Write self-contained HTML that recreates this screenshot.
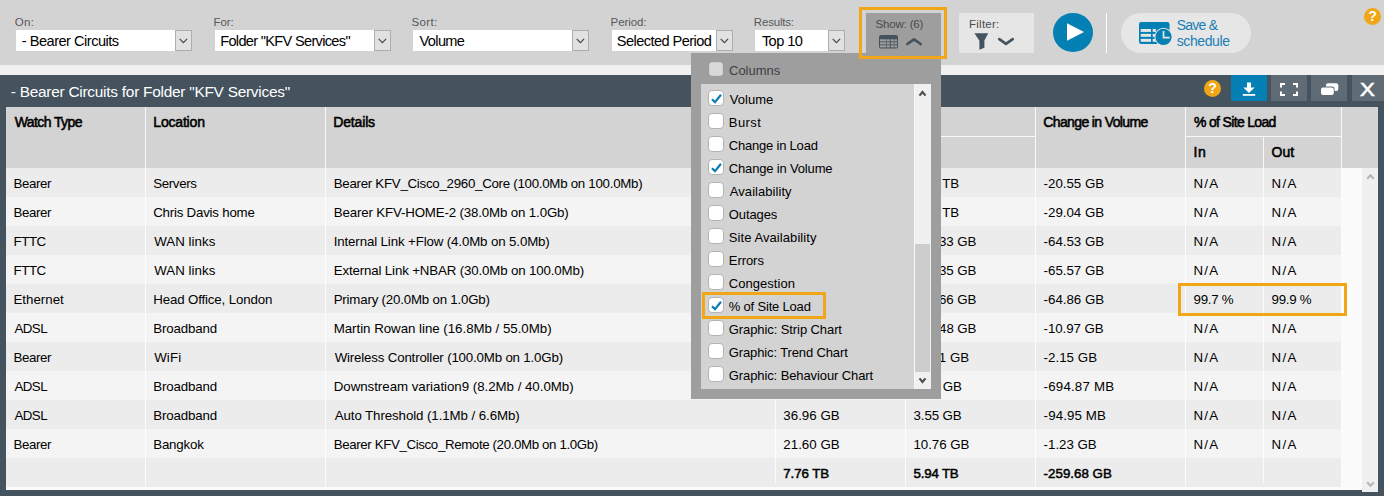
<!DOCTYPE html>
<html lang="en">
<head>
<meta charset="utf-8">
<title>Bearer Circuits for Folder "KFV Services"</title>
<style>
*{box-sizing:border-box;margin:0;padding:0}
html,body{width:1384px;height:496px;overflow:hidden}
body{position:relative;background:#44535e;font-family:"Liberation Sans",Arial,sans-serif;font-size:13px;color:#000}
.abs{position:absolute}
.t{position:absolute;white-space:pre;line-height:20px;height:20px}
.lb{font-size:11.5px}
.sv{font-size:14.6px}
.sa{font-size:14px}
.ti{font-size:15.4px}
.xb{font-size:18.5px;-webkit-text-stroke:0.6px #fff}
.th{font-size:14px;-webkit-text-stroke:0.55px #000}
.td{font-size:13.3px}
.tf{-webkit-text-stroke:0.5px #000}
.it{font-size:13px}
#toolbar{position:absolute;left:0;top:0;width:1384px;height:65px;background:#d3d3d3}
#strip{position:absolute;left:0;top:65px;width:1384px;height:10px;background:#f0f0f0}
.sel{position:absolute;top:30px;height:21px;background:#fff}
.dd{position:absolute;top:30px;width:17px;height:21px;background:#e1e1e1;border:1px solid #adadad}
.dd svg{position:absolute;left:3px;top:7px}
#showbtn{position:absolute;left:866px;top:13px;width:75px;height:42px;background:#9e9e9e}
#showhl{position:absolute;left:859px;top:7px;width:88px;height:52px;border:3px solid #f0a616;z-index:30}
#filterbtn{position:absolute;left:959px;top:13px;width:75px;height:40px;background:#e6e6e6}
#play{position:absolute;left:1053px;top:13px;width:40px;height:39.4px;border-radius:50%;background:#0480b4}
#sep{position:absolute;left:1106px;top:13px;width:1px;height:40px;background:#fcfcfc}
#save{position:absolute;left:1121px;top:13px;width:130px;height:40px;border-radius:20px;background:#e6e6e6}
.help{position:absolute;width:17px;height:17px;border-radius:50%;background:#f0a616;color:#fff;font-weight:bold;font-size:14px;line-height:17px;text-align:center}
.hbtn{position:absolute;top:75px;height:26px;width:36px;background:#5f6c76}
#tbl{position:absolute;left:6px;top:107px;width:1372px;height:385px;background:#fbfbfb;overflow:hidden}
#botfill{position:absolute;left:0;top:383px;width:1356px;height:2px;background:#44535e}
#thead{position:absolute;left:0;top:0;width:1372px;height:61px;background:#d3d3d3}
.vline{position:absolute;width:1px;background:#f8f8f8}
.hline{position:absolute;height:1px;background:#f8f8f8}
.row{position:absolute;left:0;width:1335px;height:29px}
.row.o{background:#ececec}
.row.e{background:#f4f4f4}
.bline{position:absolute;width:1px;background:rgba(255,255,255,.8)}
#vsb{position:absolute;left:1356px;top:61px;width:16px;height:324px;background:#f0f0f0}
#panel{position:absolute;left:691px;top:53px;width:250px;height:346px;background:#9e9e9e;z-index:20}
#list{position:absolute;left:10px;top:31px;width:230px;height:305px;background:#d3d3d3}
#lsb{position:absolute;left:213px;top:0;width:17px;height:305px;background:#f0f0f0;border-left:1px solid #f8f8f8}
#thumb{position:absolute;left:0;top:160px;width:15px;height:128px;background:#cdcdcd}
.cb{position:absolute;width:16px;height:16px;border-radius:4px;background:#fff;border:1px solid #b4b4b4}
.cb.dis{background:#d9d9d9;border-color:#cfcfcf;width:14px;height:14px;border-radius:3px}
.cb svg{position:absolute;left:0.5px;top:0.5px}
#ithl{position:absolute;left:11px;top:239px;width:124px;height:27px;border:3px solid #f0a616}
#cellhl{position:absolute;left:1172px;top:176px;width:169px;height:33px;border:3px solid #f0a616;z-index:5}
</style>
</head>
<body>
<div id="toolbar">
  <div class="sel" style="left:16px;width:159px"></div><div class="dd" style="left:175px"><svg width="9" height="6" viewBox="0 0 9 6"><path d="M0.7 0.8 L4.4 4.6 L8.1 0.8" fill="none" stroke="#444" stroke-width="1.15"/></svg></div>
  <span class="t lb" style="left:14.7px;top:12.12px;letter-spacing:0.4px;color:#58585a">On:</span><span class="t sv" style="left:21.8px;top:30.64px;letter-spacing:-0.506px">- Bearer Circuits</span>
  <div class="sel" style="left:215px;width:159px"></div><div class="dd" style="left:374px"><svg width="9" height="6" viewBox="0 0 9 6"><path d="M0.7 0.8 L4.4 4.6 L8.1 0.8" fill="none" stroke="#444" stroke-width="1.15"/></svg></div>
  <span class="t lb" style="left:213.6px;top:12.12px;letter-spacing:-0.133px;color:#58585a">For:</span><span class="t sv" style="left:220.2px;top:30.64px;letter-spacing:-0.69px">Folder &quot;KFV Services&quot;</span>
  <div class="sel" style="left:413px;width:159px"></div><div class="dd" style="left:572px"><svg width="9" height="6" viewBox="0 0 9 6"><path d="M0.7 0.8 L4.4 4.6 L8.1 0.8" fill="none" stroke="#444" stroke-width="1.15"/></svg></div>
  <span class="t lb" style="left:411.6px;top:12.12px;letter-spacing:0.35px;color:#58585a">Sort:</span><span class="t sv" style="left:419.6px;top:30.64px;letter-spacing:-0.66px">Volume</span>
  <div class="sel" style="left:612px;width:104px"></div><div class="dd" style="left:716px"><svg width="9" height="6" viewBox="0 0 9 6"><path d="M0.7 0.8 L4.4 4.6 L8.1 0.8" fill="none" stroke="#444" stroke-width="1.15"/></svg></div>
  <span class="t lb" style="left:610.6px;top:12.12px;letter-spacing:-0.1px;color:#58585a">Period:</span><span class="t sv" style="left:616.8px;top:30.64px;letter-spacing:-0.571px">Selected Period</span>
  <div class="sel" style="left:755px;width:73px"></div><div class="dd" style="left:828px"><svg width="9" height="6" viewBox="0 0 9 6"><path d="M0.7 0.8 L4.4 4.6 L8.1 0.8" fill="none" stroke="#444" stroke-width="1.15"/></svg></div>
  <span class="t lb" style="left:753.8px;top:12.12px;letter-spacing:-0.186px;color:#58585a">Results:</span><span class="t sv" style="left:761.9px;top:30.64px;letter-spacing:-0.58px">Top 10</span>
  <div id="showbtn">
    <svg class="abs" style="left:13px;top:21.6px" width="19" height="14" viewBox="0 0 19 14">
      <rect x="0" y="0" width="19" height="13.5" rx="2" fill="#44535e"/>
      <g fill="#9e9e9e"><rect x="1" y="4.3" width="9.8" height="2.1"/><rect x="11.8" y="4.3" width="6.2" height="2.1"/>
      <rect x="1" y="7.3" width="9.8" height="2.1"/><rect x="11.8" y="7.3" width="6.2" height="2.1"/>
      <rect x="1" y="10.3" width="9.8" height="2.1"/><rect x="11.8" y="10.3" width="6.2" height="2.1"/></g>
      <g fill="#44535e" opacity=".55"><rect x="7" y="4" width="1" height="9"/><rect x="14.6" y="4" width="1" height="9"/></g>
    </svg>
    <svg class="abs" style="left:39px;top:24px" width="18" height="9" viewBox="0 0 18 9"><path d="M2.3 7 L9 2.3 L15.7 7" fill="none" stroke="#44535e" stroke-width="2.7" stroke-linecap="round" stroke-linejoin="round"/></svg>
  </div>
  <div id="filterbtn">
    <svg class="abs" style="left:15px;top:20px" width="15" height="17" viewBox="0 0 15 17"><path d="M0.4 0.3 H14.2 L10.4 7.6 V14.8 L5.4 16.7 V7.8 Z" fill="#44535e"/></svg>
    <svg class="abs" style="left:38.3px;top:24px" width="18" height="9" viewBox="0 0 18 9"><path d="M2.3 2.2 L9 6.9 L15.7 2.2" fill="none" stroke="#44535e" stroke-width="2.7" stroke-linecap="round" stroke-linejoin="round"/></svg>
  </div>
  <div id="play"><svg class="abs" style="left:13px;top:9.4px" width="19" height="20" viewBox="0 0 19 20"><path d="M1 1.2 L18 10 L1 18.8 Z" fill="#fff"/></svg></div>
  <div id="sep"></div>
  <div id="save">
    <svg class="abs" style="left:18px;top:9px" width="35" height="25" viewBox="0 0 35 25">
      <rect x="0" y="0" width="30.5" height="22" rx="2.2" fill="#0480b4"/>
      <g fill="#e6e6e6"><rect x="1.7" y="7" width="10.3" height="2.9"/><rect x="1.7" y="11.9" width="10.3" height="2.9"/><rect x="1.7" y="16.9" width="10.3" height="2.9"/>
      <rect x="13.7" y="7" width="3.2" height="2.9"/><rect x="13.7" y="11.9" width="2.4" height="2.9"/><rect x="13.7" y="16.9" width="3.2" height="2.9"/></g>
      <circle cx="24.5" cy="14.9" r="9.1" fill="#e6e6e6"/>
      <circle cx="24.5" cy="14.9" r="8.1" fill="#0480b4"/>
      <path d="M24.5 9 V15.6 H30.7" fill="none" stroke="#e6e6e6" stroke-width="1.7"/>
    </svg>
  </div>
  <div class="help" style="left:1364px;top:8px">?</div>

  <span class="t lb" style="left:875.4px;top:14.32px;letter-spacing:-0.15px;color:#4a4a4c">Show: (6)</span><span class="t lb" style="left:969px;top:14.32px;letter-spacing:0.25px;color:#4a4a4c">Filter:</span><span class="t sa" style="left:1176.7px;top:14.85px;letter-spacing:-0.74px;color:#1a7fb5">Save &amp;</span><span class="t sa" style="left:1176.7px;top:30.75px;letter-spacing:-0.386px;color:#1a7fb5">schedule</span>
</div>
<div id="strip"></div>
<span class="t ti" style="left:10.8px;top:81.96px;letter-spacing:-0.248px;color:#fff">- Bearer Circuits for Folder &quot;KFV Services&quot;</span>
<div class="help" style="left:1204px;top:80px">?</div>
<div class="hbtn" style="left:1231px;background:#0480b4">
  <svg class="abs" style="left:11px;top:7px" width="14" height="14" viewBox="0 0 14 14"><path d="M5 0.5 H9 V5.5 H12.6 L7 11 L1.4 5.5 H5 Z" fill="#fff"/><rect x="0.8" y="12" width="12.4" height="1.8" fill="#fff"/></svg>
</div>
<div class="hbtn" style="left:1271px">
  <svg class="abs" style="left:9px;top:8px" width="18" height="13" viewBox="0 0 18 13"><path d="M5 1 H1 V4.5 M13 1 H17 V4.5 M5 12 H1 V8.5 M13 12 H17 V8.5" fill="none" stroke="#fff" stroke-width="2"/></svg>
</div>
<div class="hbtn" style="left:1311px">
  <svg class="abs" style="left:9px;top:8px" width="19" height="13" viewBox="0 0 19 13"><rect x="6" y="0.3" width="12.3" height="7.6" rx="2" fill="#fff"/><rect x="0.2" y="3.6" width="14.4" height="9" rx="2.4" fill="#5f6c76"/><rect x="1" y="4.4" width="12.8" height="7.6" rx="2" fill="#fff"/></svg>
</div>
<div class="hbtn" style="left:1352px;width:32px"></div>

<span class="t xb" style="left:1359.6px;top:79.99px;letter-spacing:0px;color:#fff;transform:scaleX(1.2);transform-origin:0 0">X</span>
<div id="tbl">
  <div id="thead">
    <span class="t th" style="left:8.7px;top:5.35px;letter-spacing:-0.6px">Watch Type</span>
    <span class="t th" style="left:147.3px;top:5.35px;letter-spacing:-0.186px">Location</span>
    <span class="t th" style="left:327.3px;top:5.35px;letter-spacing:-0.167px">Details</span>
    <span class="t th" style="left:778.3px;top:5.35px;letter-spacing:0.14px">Volume</span>
    <span class="t th" style="left:777.4px;top:35.15px;letter-spacing:0.4px">In</span>
    <span class="t th" style="left:907.5px;top:35.15px;letter-spacing:0.0px">Out</span>
    <span class="t th" style="left:1037.3px;top:5.35px;letter-spacing:-0.627px">Change in Volume</span>
    <span class="t th" style="left:1188px;top:5.35px;letter-spacing:-0.669px">% of Site Load</span>
    <span class="t th" style="left:1187.6px;top:35.15px;letter-spacing:0.4px">In</span>
    <span class="t th" style="left:1265.5px;top:35.15px;letter-spacing:0.0px">Out</span>
    <div class="vline" style="left:139px;top:0;height:61px"></div>
    <div class="vline" style="left:319px;top:0;height:61px"></div>
    <div class="vline" style="left:769px;top:0;height:61px"></div>
    <div class="vline" style="left:899px;top:30px;height:31px"></div>
    <div class="vline" style="left:1029px;top:0;height:61px"></div>
    <div class="vline" style="left:1179px;top:0;height:61px"></div>
    <div class="vline" style="left:1257px;top:30px;height:31px"></div>
    <div class="vline" style="left:1335px;top:0;height:61px"></div>
    <div class="hline" style="left:769px;top:29px;width:260px"></div>
    <div class="hline" style="left:1179px;top:29px;width:156px"></div>

  </div>
  <div id="tbody">
    <div class="row o" style="top:61px"></div>
    <div class="row e" style="top:90px"></div>
    <div class="row o" style="top:119px"></div>
    <div class="row e" style="top:148px"></div>
    <div class="row o" style="top:177px"></div>
    <div class="row e" style="top:206px"></div>
    <div class="row o" style="top:235px"></div>
    <div class="row e" style="top:264px"></div>
    <div class="row o" style="top:293px"></div>
    <div class="row e" style="top:322px"></div>
    <div class="row o" style="top:351px"></div>
    <span class="t td" style="left:7.5px;top:66.89px;letter-spacing:-0.38px">Bearer</span><span class="t td" style="left:147.2px;top:66.89px;letter-spacing:-0.35px">Servers</span><span class="t td" style="left:327.7px;top:66.89px;letter-spacing:-0.274px">Bearer KFV_Cisco_2960_Core (100.0Mb on 100.0Mb)</span><span class="t td" style="left:777.3px;top:66.89px;letter-spacing:-0.217px">5.41 TB</span><span class="t td" style="left:907.5px;top:66.89px;letter-spacing:-0.133px">2.27 TB</span><span class="t td" style="left:1037.6px;top:66.89px;letter-spacing:-0.012px">-20.55 GB</span><span class="t td" style="left:1187.5px;top:66.89px;letter-spacing:1.25px">N/A</span><span class="t td" style="left:1265.6px;top:66.89px;letter-spacing:1.25px">N/A</span>
    <span class="t td" style="left:7.5px;top:95.89px;letter-spacing:-0.38px">Bearer</span><span class="t td" style="left:147.2px;top:95.89px;letter-spacing:-0.22px">Chris Davis home</span><span class="t td" style="left:327.7px;top:95.89px;letter-spacing:-0.15px">Bearer KFV-HOME-2 (38.0Mb on 1.0Gb)</span><span class="t td" style="left:777.3px;top:95.89px;letter-spacing:-0.217px">1.26 TB</span><span class="t td" style="left:907.5px;top:95.89px;letter-spacing:-0.133px">2.04 TB</span><span class="t td" style="left:1037.6px;top:95.89px;letter-spacing:-0.012px">-29.04 GB</span><span class="t td" style="left:1187.5px;top:95.89px;letter-spacing:1.25px">N/A</span><span class="t td" style="left:1265.6px;top:95.89px;letter-spacing:1.25px">N/A</span>
    <span class="t td" style="left:7.5px;top:124.89px;letter-spacing:-0.433px">FTTC</span><span class="t td" style="left:148.2px;top:124.89px;letter-spacing:0.038px">WAN links</span><span class="t td" style="left:327.7px;top:124.89px;letter-spacing:-0.129px">Internal Link +Flow (4.0Mb on 5.0Mb)</span><span class="t td" style="left:777.3px;top:124.89px;letter-spacing:-0.05px">312.18 GB</span><span class="t td" style="left:907.5px;top:124.89px;letter-spacing:-0.1px">515.33 GB</span><span class="t td" style="left:1037.6px;top:124.89px;letter-spacing:-0.012px">-64.53 GB</span><span class="t td" style="left:1187.5px;top:124.89px;letter-spacing:1.25px">N/A</span><span class="t td" style="left:1265.6px;top:124.89px;letter-spacing:1.25px">N/A</span>
    <span class="t td" style="left:7.5px;top:153.89px;letter-spacing:-0.433px">FTTC</span><span class="t td" style="left:148.2px;top:153.89px;letter-spacing:0.038px">WAN links</span><span class="t td" style="left:327.7px;top:153.89px;letter-spacing:-0.147px">External Link +NBAR (30.0Mb on 100.0Mb)</span><span class="t td" style="left:777.3px;top:153.89px;letter-spacing:-0.05px">301.72 GB</span><span class="t td" style="left:907.5px;top:153.89px;letter-spacing:-0.1px">514.35 GB</span><span class="t td" style="left:1037.6px;top:153.89px;letter-spacing:-0.012px">-65.57 GB</span><span class="t td" style="left:1187.5px;top:153.89px;letter-spacing:1.25px">N/A</span><span class="t td" style="left:1265.6px;top:153.89px;letter-spacing:1.25px">N/A</span>
    <span class="t td" style="left:7.5px;top:182.89px;letter-spacing:0.0px">Ethernet</span><span class="t td" style="left:147.2px;top:182.89px;letter-spacing:-0.144px">Head Office, London</span><span class="t td" style="left:327.7px;top:182.89px;letter-spacing:-0.2px">Primary (20.0Mb on 1.0Gb)</span><span class="t td" style="left:777.3px;top:182.89px;letter-spacing:-0.05px">298.44 GB</span><span class="t td" style="left:907.5px;top:182.89px;letter-spacing:-0.1px">509.66 GB</span><span class="t td" style="left:1037.6px;top:182.89px;letter-spacing:-0.012px">-64.86 GB</span><span class="t td" style="left:1187.5px;top:182.89px;letter-spacing:-0.26px">99.7 %</span><span class="t td" style="left:1265.6px;top:182.89px;letter-spacing:-0.26px">99.9 %</span>
    <span class="t td" style="left:8.5px;top:211.89px;letter-spacing:-0.567px">ADSL</span><span class="t td" style="left:147.2px;top:211.89px;letter-spacing:-0.137px">Broadband</span><span class="t td" style="left:327.7px;top:211.89px;letter-spacing:-0.026px">Martin Rowan line (16.8Mb / 55.0Mb)</span><span class="t td" style="left:777.3px;top:211.89px;letter-spacing:0.029px">87.02 GB</span><span class="t td" style="left:907.5px;top:211.89px;letter-spacing:-0.075px">104.48 GB</span><span class="t td" style="left:1037.6px;top:211.89px;letter-spacing:-0.075px">-10.97 GB</span><span class="t td" style="left:1187.5px;top:211.89px;letter-spacing:1.25px">N/A</span><span class="t td" style="left:1265.6px;top:211.89px;letter-spacing:1.25px">N/A</span>
    <span class="t td" style="left:7.5px;top:240.89px;letter-spacing:-0.38px">Bearer</span><span class="t td" style="left:148.2px;top:240.89px;letter-spacing:0.133px">WiFi</span><span class="t td" style="left:328.7px;top:240.89px;letter-spacing:-0.178px">Wireless Controller (100.0Mb on 1.0Gb)</span><span class="t td" style="left:777.3px;top:240.89px;letter-spacing:0.029px">64.35 GB</span><span class="t td" style="left:907.5px;top:240.89px;letter-spacing:0.071px">19.11 GB</span><span class="t td" style="left:1037.6px;top:240.89px;letter-spacing:0.029px">-2.15 GB</span><span class="t td" style="left:1187.5px;top:240.89px;letter-spacing:1.25px">N/A</span><span class="t td" style="left:1265.6px;top:240.89px;letter-spacing:1.25px">N/A</span>
    <span class="t td" style="left:8.5px;top:269.89px;letter-spacing:-0.567px">ADSL</span><span class="t td" style="left:147.2px;top:269.89px;letter-spacing:-0.137px">Broadband</span><span class="t td" style="left:327.7px;top:269.89px;letter-spacing:-0.027px">Downstream variation9 (8.2Mb / 40.0Mb)</span><span class="t td" style="left:778.3px;top:269.89px;letter-spacing:-0.114px">41.20 GB</span><span class="t td" style="left:907.5px;top:269.89px;letter-spacing:-0.083px">5.07 GB</span><span class="t td" style="left:1037.6px;top:269.89px;letter-spacing:0.189px">-694.87 MB</span><span class="t td" style="left:1187.5px;top:269.89px;letter-spacing:1.25px">N/A</span><span class="t td" style="left:1265.6px;top:269.89px;letter-spacing:1.25px">N/A</span>
    <span class="t td" style="left:8.5px;top:298.89px;letter-spacing:-0.567px">ADSL</span><span class="t td" style="left:147.2px;top:298.89px;letter-spacing:-0.137px">Broadband</span><span class="t td" style="left:328.7px;top:298.89px;letter-spacing:-0.086px">Auto Threshold (1.1Mb / 6.6Mb)</span><span class="t td" style="left:777.3px;top:298.89px;letter-spacing:0.029px">36.96 GB</span><span class="t td" style="left:907.5px;top:298.89px;letter-spacing:-0.1px">3.55 GB</span><span class="t td" style="left:1037.6px;top:298.89px;letter-spacing:0.113px">-94.95 MB</span><span class="t td" style="left:1187.5px;top:298.89px;letter-spacing:1.25px">N/A</span><span class="t td" style="left:1265.6px;top:298.89px;letter-spacing:1.25px">N/A</span>
    <span class="t td" style="left:7.5px;top:327.89px;letter-spacing:-0.38px">Bearer</span><span class="t td" style="left:147.2px;top:327.89px;letter-spacing:-0.167px">Bangkok</span><span class="t td" style="left:327.7px;top:327.89px;letter-spacing:-0.37px">Bearer KFV_Cisco_Remote (20.0Mb on 1.0Gb)</span><span class="t td" style="left:777.3px;top:327.89px;letter-spacing:0.029px">21.60 GB</span><span class="t td" style="left:907.5px;top:327.89px;letter-spacing:-0.057px">10.76 GB</span><span class="t td" style="left:1037.6px;top:327.89px;letter-spacing:-0.014px">-1.23 GB</span><span class="t td" style="left:1187.5px;top:327.89px;letter-spacing:1.25px">N/A</span><span class="t td" style="left:1265.6px;top:327.89px;letter-spacing:1.25px">N/A</span>
    <span class="t td tf" style="left:777.3px;top:356.89px;letter-spacing:-0.067px">7.76 TB</span><span class="t td tf" style="left:907.5px;top:356.89px;letter-spacing:-0.183px">5.94 TB</span><span class="t td tf" style="left:1037.6px;top:356.89px;letter-spacing:0.022px">-259.68 GB</span>
    <div class="bline" style="left:139px;top:61px;height:319px"></div>
    <div class="bline" style="left:319px;top:61px;height:319px"></div>
    <div class="bline" style="left:769px;top:61px;height:315px"></div>
    <div class="bline" style="left:899px;top:61px;height:319px"></div>
    <div class="bline" style="left:1029px;top:61px;height:319px"></div>
    <div class="bline" style="left:1179px;top:61px;height:319px"></div>
    <div class="bline" style="left:1257px;top:61px;height:315px"></div>
    <div id="cellhl"></div>

  </div>
  <div id="vsb">
    <svg class="abs" style="left:3.5px;top:5px" width="9" height="7" viewBox="0 0 9 7"><path d="M1.2 5.8 L4.5 2.2 L7.8 5.8" fill="none" stroke="#b5b5b5" stroke-width="2"/></svg>
    <svg class="abs" style="left:3.5px;top:313px" width="9" height="7" viewBox="0 0 9 7"><path d="M1.2 1.2 L4.5 4.8 L7.8 1.2" fill="none" stroke="#b5b5b5" stroke-width="2"/></svg>
  </div>
  <div id="botfill"></div>

</div>
<div id="panel">
  <div class="cb dis" style="left:18px;top:9px"></div>
  <span class="t it" style="left:38px;top:7.5px;letter-spacing:0.0px;color:#404042">Columns</span>
  <div id="list">
    <div class="cb" style="left:7px;top:6px"><svg width="13" height="13" viewBox="0 0 13 13"><path d="M2 7.2 L5 10.2 L11 2.8" fill="none" stroke="#0a7cb5" stroke-width="2.2"/></svg></div><span class="t it" style="left:28.8px;top:6.2px;letter-spacing:0.02px">Volume</span>
    <div class="cb" style="left:7px;top:29px"></div><span class="t it" style="left:27.8px;top:29.2px;letter-spacing:0.425px">Burst</span>
    <div class="cb" style="left:7px;top:52px"></div><span class="t it" style="left:27.8px;top:52.2px;letter-spacing:-0.208px">Change in Load</span>
    <div class="cb" style="left:7px;top:75px"><svg width="13" height="13" viewBox="0 0 13 13"><path d="M2 7.2 L5 10.2 L11 2.8" fill="none" stroke="#0a7cb5" stroke-width="2.2"/></svg></div><span class="t it" style="left:27.8px;top:75.2px;letter-spacing:-0.167px">Change in Volume</span>
    <div class="cb" style="left:7px;top:98px"></div><span class="t it" style="left:28.8px;top:98.2px;letter-spacing:0.055px">Availability</span>
    <div class="cb" style="left:7px;top:121px"></div><span class="t it" style="left:27.8px;top:121.2px;letter-spacing:-0.1px">Outages</span>
    <div class="cb" style="left:7px;top:144px"></div><span class="t it" style="left:27.8px;top:144.2px;letter-spacing:0.075px">Site Availability</span>
    <div class="cb" style="left:7px;top:167px"></div><span class="t it" style="left:27.8px;top:167.2px;letter-spacing:-0.06px">Errors</span>
    <div class="cb" style="left:7px;top:190px"></div><span class="t it" style="left:27.8px;top:190.2px;letter-spacing:0.044px">Congestion</span>
    <div class="cb" style="left:7px;top:213px"><svg width="13" height="13" viewBox="0 0 13 13"><path d="M2 7.2 L5 10.2 L11 2.8" fill="none" stroke="#0a7cb5" stroke-width="2.2"/></svg></div><span class="t it" style="left:27.8px;top:213.2px;letter-spacing:-0.192px">% of Site Load</span>
    <div class="cb" style="left:7px;top:236px"></div><span class="t it" style="left:27.8px;top:236.2px;letter-spacing:-0.089px">Graphic: Strip Chart</span>
    <div class="cb" style="left:7px;top:259px"></div><span class="t it" style="left:27.8px;top:259.2px;letter-spacing:-0.126px">Graphic: Trend Chart</span>
    <div class="cb" style="left:7px;top:282px"></div><span class="t it" style="left:27.8px;top:282.2px;letter-spacing:-0.1px">Graphic: Behaviour Chart</span>
    <div id="lsb">
      <svg class="abs" style="left:3px;top:5px" width="9" height="8" viewBox="0 0 9 8"><path d="M1.5 6.6 L4.5 3 L7.5 6.6" fill="none" stroke="#505050" stroke-width="2.2"/></svg>
      <div id="thumb"></div>
      <svg class="abs" style="left:3px;top:293px" width="9" height="8" viewBox="0 0 9 8"><path d="M1.5 1.4 L4.5 5 L7.5 1.4" fill="none" stroke="#505050" stroke-width="2.2"/></svg>
    </div>

  </div>
  <div id="ithl"></div>
</div>
<div id="showhl"></div>
</body>
</html>
